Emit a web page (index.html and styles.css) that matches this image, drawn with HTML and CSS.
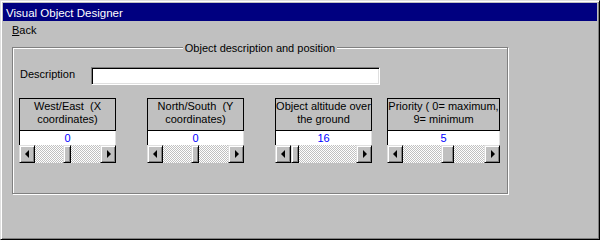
FILE: index.html
```html
<!DOCTYPE html>
<html lang="en">
<head>
  <meta charset="UTF-8">
  <title>Visual Object Designer</title>
  <link rel="stylesheet" href="styles.css">
</head>
<body>

  <div class="window">
    <div class="titlebar">Visual Object Designer</div>

    <div class="menubar">
      <span class="menu-item"><u>B</u>ack</span>
    </div>

    <div class="client">
      <fieldset class="group">
        <legend>Object description and position</legend>

        <div class="desc-row">
          <label for="description">Description</label>
          <div class="textbox" id="description"></div>
        </div>

        <div class="panels">
          <div class="panel">
            <div class="panel-title">West/East&nbsp; (X<br>coordinates)</div>
            <div class="panel-value">0</div>
            <div class="scrollbar">
              <span class="sb-btn left"></span>
              <div class="sb-track"><span class="sb-thumb" style="margin-left: 28px"></span></div>
              <span class="sb-btn right"></span>
            </div>
          </div>

          <div class="panel">
            <div class="panel-title">North/South&nbsp; (Y<br>coordinates)</div>
            <div class="panel-value">0</div>
            <div class="scrollbar">
              <span class="sb-btn left"></span>
              <div class="sb-track"><span class="sb-thumb" style="margin-left: 28px"></span></div>
              <span class="sb-btn right"></span>
            </div>
          </div>

          <div class="panel">
            <div class="panel-title">Object altitude over<br>the ground</div>
            <div class="panel-value">16</div>
            <div class="scrollbar">
              <span class="sb-btn left"></span>
              <div class="sb-track"><span class="sb-thumb" style="margin-left: 0px"></span></div>
              <span class="sb-btn right"></span>
            </div>
          </div>

          <div class="panel wide">
            <div class="panel-title">Priority ( 0= maximum,<br>9= minimum</div>
            <div class="panel-value">5</div>
            <div class="scrollbar">
              <span class="sb-btn left"></span>
              <div class="sb-track"><span class="sb-thumb big" style="margin-left: 38px"></span></div>
              <span class="sb-btn right"></span>
            </div>
          </div>
        </div>
      </fieldset>
    </div>
  </div>

</body>
</html>
```

FILE: styles.css
```css
body {
  margin: 0;
  background-color: #c0c0c0;
}

.window {
  width: 600px;
  height: 240px;
  box-sizing: border-box;
  padding: 2px;
  background-color: #c0c0c0;
  border: 1px solid;
  border-color: #dfdfdf #000 #000 #dfdfdf;
  box-shadow: inset 1px 1px #fff, inset -1px -1px #808080;
  font-family: "Liberation Sans", Arial, sans-serif;
  font-size: 11px;
  color: #000;
}

.titlebar {
  height: 18px;
  padding-left: 3px;
  line-height: 20px;
  overflow: hidden;
  background-color: #000080;
  color: #fff;
  font-size: 11.5px;
}

.menubar {
  height: 16px;
  padding: 3px 0 0 9px;
  line-height: 13px;
}

.client {
  padding: 1px 0 0 9px;
}

.group {
  box-sizing: border-box;
  width: 496px;
  min-width: 0;
  margin: 0;
  padding: 0 6px 30px 6px;
  border: 1px solid #808080;
  box-shadow: inset 1px 1px #fff, 1px 1px #fff;
}

.group legend {
  margin: 0 auto;
  padding: 0 2px;
  line-height: 13px;
  background-color: #c0c0c0;
  position: relative;
  top: 1px;
}

.desc-row {
  display: flex;
  align-items: flex-start;
  margin-top: 13px;
  padding-left: 1px;
}

.desc-row label {
  width: 71px;
  line-height: 13px;
  padding-top: 1px;
}

.textbox {
  width: 289px;
  height: 18px;
  box-sizing: border-box;
  background-color: #fff;
  border: 1px solid;
  border-color: #808080 #fff #fff #808080;
  box-shadow: inset 1px 1px #000, inset -1px -1px #dfdfdf;
}

.panels {
  display: grid;
  grid-template-columns: 128px 128px 112px 113px;
  margin-top: 13px;
}

.panel {
  width: 97px;
}

.panel.wide {
  width: 113px;
}

.panel-title {
  height: 33px;
  box-sizing: border-box;
  border: 1px solid #000;
  text-align: center;
  line-height: 13px;
  padding-top: 1px;
  white-space: nowrap;
  overflow: hidden;
}

.panel-value {
  height: 13px;
  padding-top: 1px;
  line-height: 13px;
  background-color: #fff;
  border-left: 1px solid #000;
  border-right: 1px solid #dfdfdf;
  color: #0000ff;
  text-align: center;
}

.scrollbar {
  display: flex;
  height: 18px;
}

.sb-btn,
.sb-thumb {
  box-sizing: border-box;
  height: 18px;
  background-color: #c0c0c0;
  border: 1px solid;
  border-color: #dfdfdf #000 #000 #dfdfdf;
  box-shadow: inset 1px 1px #fff, inset -1px -1px #808080;
}

.sb-btn {
  width: 16px;
  display: flex;
  align-items: center;
  justify-content: center;
}

.sb-btn::before {
  content: "";
  border-top: 4px solid transparent;
  border-bottom: 4px solid transparent;
}

.sb-btn.left::before {
  border-right: 4px solid #000;
  margin-right: 1px;
}

.sb-btn.right::before {
  border-left: 4px solid #000;
  margin-left: 1px;
}

.sb-track {
  flex: 1;
  display: flex;
  background: repeating-conic-gradient(#fff 0 25%, #c0c0c0 0 50%) 0 0 / 2px 2px;
}

.sb-thumb {
  display: block;
  width: 8px;
}

.sb-thumb.big {
  width: 13px;
}
```
